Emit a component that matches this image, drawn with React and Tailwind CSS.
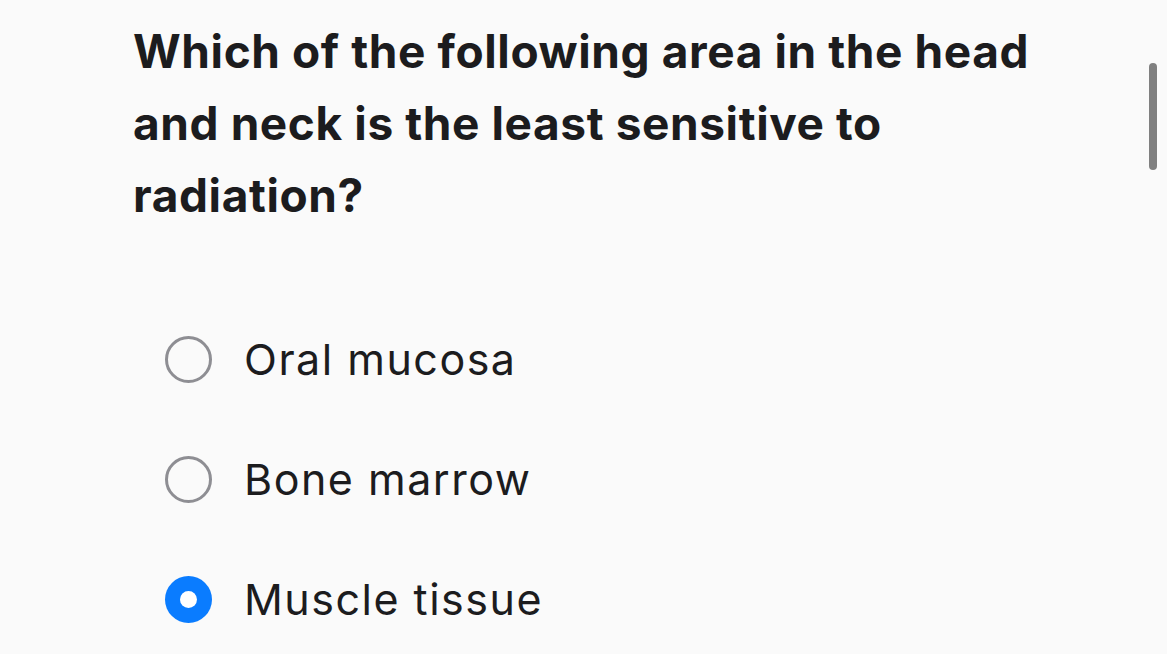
import React from "react";

const options = [
  { label: "Oral mucosa", selected: false },
  { label: "Bone marrow", selected: false },
  { label: "Muscle tissue", selected: true },
];

function Radio({ selected }) {
  if (selected) {
    return (
      <div className="w-[47px] h-[47px] rounded-full bg-[#0a7cff] flex items-center justify-center shrink-0">
        <div className="w-[17px] h-[17px] rounded-full bg-white" />
      </div>
    );
  }
  return <div className="w-[47px] h-[47px] rounded-full border-[3px] border-[#8e8e93] shrink-0" />;
}

export default function App() {
  return (
    <div
      className="relative w-[1167px] h-[654px] overflow-hidden bg-[#fafafa] text-[#1c1c1e]"
      style={{ fontFamily: "Inter, 'Noto Sans', sans-serif" }}
    >
      {/* scroll indicator */}
      <div className="absolute left-[1149px] top-[63px] w-[8px] h-[107px] rounded-full bg-[#808080]" />

      <main className="pl-[133px] pt-[15px]">
        <h1 className="w-[960px] text-[46px] leading-[72px] font-bold tracking-[0.6px]">
          Which of the following area in the head and neck is the least sensitive to radiation?
        </h1>

        <ul className="mt-[68px] pl-[32px]">
          {options.map((o) => (
            <li key={o.label} className="h-[120px] flex items-center gap-[32px]">
              <Radio selected={o.selected} />
              <span className="text-[43px] leading-none tracking-[1.5px]">{o.label}</span>
            </li>
          ))}
        </ul>
      </main>
    </div>
  );
}
